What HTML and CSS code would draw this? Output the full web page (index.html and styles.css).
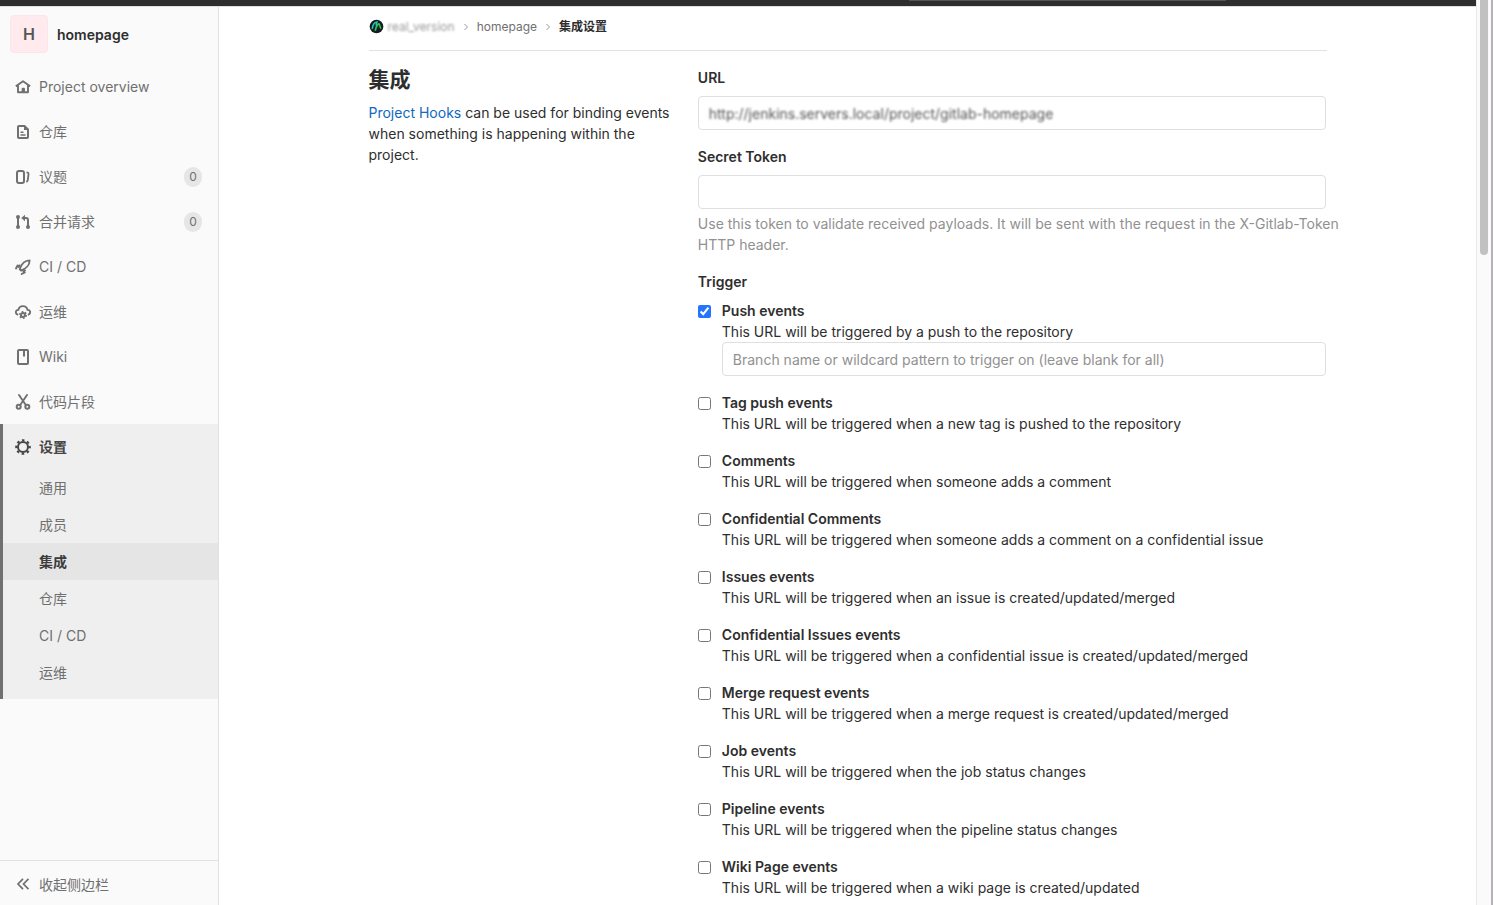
FILE: index.html
```html
<!DOCTYPE html>
<html lang="zh-CN">
<head>
<meta charset="utf-8">
<title>集成设置 · homepage</title>
<link rel="stylesheet" href="styles.css">
</head>
<body>
<div class="window">
  <div class="page">
    <header class="topbar"><div class="topbar-search"></div></header>
    <div class="layout">
      <aside class="sidebar">
        <div class="sidebar-scroll">
          <a class="project" href="#"><span class="project-avatar">H</span><span class="project-name">homepage</span></a>
          <nav>
            <a class="nav-item" href="#">
              <svg class="icon" viewBox="0 0 16 16"><path d="M.8 7.200 8 2.200l7.200 5M3 6.500V13.200H13V6.500M7.600 13V9.800H9V13" fill="none" stroke="currentColor" stroke-width="1.900" stroke-linejoin="round"/></svg>
              <span>Project overview</span></a>
            <a class="nav-item" href="#">
              <svg class="icon" viewBox="0 0 16 16"><path d="M4 2h5.500L13 5.500V13a1 1 0 0 1-1 1H4a1 1 0 0 1-1-1V3a1 1 0 0 1 1-1z" fill="none" stroke="currentColor" stroke-width="2"/><path d="M9 1.500V6h4.500zM5.500 7.500h3v1.500h-3zM5.500 10.300h5v1.500h-5z" fill="currentColor"/></svg>
              <span>仓库</span></a>
            <a class="nav-item" href="#">
              <svg class="icon" viewBox="0 0 16 16"><rect x="2" y="2" width="7" height="12" rx="2" fill="none" stroke="currentColor" stroke-width="2"/><path d="M11.500 3.300c1.700 0 2.200.8 2 2l-.7 5.500c-.1 1-.6 1.700-1.500 2" fill="none" stroke="currentColor" stroke-width="1.800"/></svg>
              <span>议题</span><span class="badge">0</span></a>
            <a class="nav-item" href="#">
              <svg class="icon" viewBox="0 0 16 16"><path d="M3 3v10M8.500 4H11q2 0 2 2v7" fill="none" stroke="currentColor" stroke-width="2"/><path d="M10 .8v6.400L6.200 4z" fill="currentColor"/><circle cx="3" cy="3" r="2" fill="currentColor"/><circle cx="3" cy="13" r="2" fill="currentColor"/><circle cx="13" cy="13" r="2" fill="currentColor"/></svg>
              <span>合并请求</span><span class="badge">0</span></a>
            <a class="nav-item" href="#">
              <svg class="icon" viewBox="0 0 16 16"><path d="M14.600 1.400C10.500 1.500 6.500 4.700 4.700 10.200l1.300 1.300c5-1.700 8.600-5.700 8.600-10.100z" fill="none" stroke="currentColor" stroke-width="1.900" stroke-linejoin="round"/><path d="M1 9.500 2.600 6.400M3.600 8l.9-1.600M6.700 15l3.100-1.600M8.400 12.300l1.600-.9" fill="none" stroke="currentColor" stroke-width="1.900" stroke-linecap="round"/></svg>
              <span>CI / CD</span></a>
            <a class="nav-item" href="#">
              <svg class="icon" viewBox="0 0 16 16"><path d="M3.200 10.800C-.2 9.800.3 5.900 3.400 5.900 4.300.8 11.500.8 12.500 5.900c3.300 0 3.600 4 .4 4.900" fill="none" stroke="currentColor" stroke-width="1.900"/><circle cx="8" cy="11" r="2" fill="none" stroke="currentColor" stroke-width="2"/><circle cx="8" cy="11" r="3.300" fill="none" stroke="currentColor" stroke-width="1.500" stroke-dasharray="1.700 1.756"/></svg>
              <span>运维</span></a>
            <a class="nav-item" href="#">
              <svg class="icon" viewBox="0 0 16 16"><rect x="3" y="1" width="10" height="14" rx="1" fill="none" stroke="currentColor" stroke-width="2"/><path d="M8 2h2v6L9 7 8 8z" fill="currentColor"/></svg>
              <span>Wiki</span></a>
            <a class="nav-item" href="#">
              <svg class="icon" viewBox="0 0 16 16"><path d="M4 1 10.800 11M12 1 5.200 11" fill="none" stroke="currentColor" stroke-width="1.900" stroke-linecap="round"/><circle cx="3.700" cy="12.800" r="2" fill="none" stroke="currentColor" stroke-width="2"/><circle cx="12.300" cy="12.800" r="2" fill="none" stroke="currentColor" stroke-width="2"/></svg>
              <span>代码片段</span></a>
            <div class="nav-group">
              <a class="nav-item nav-item-active" href="#">
                <svg class="icon" viewBox="0 0 16 16"><circle cx="8" cy="8" r="5" fill="none" stroke="currentColor" stroke-width="2"/><circle cx="8" cy="8" r="6.800" fill="none" stroke="currentColor" stroke-width="2" stroke-dasharray="2.600 2.740" stroke-dashoffset="1.300"/></svg>
                <span>设置</span></a>
              <a class="sub-item" href="#">通用</a>
              <a class="sub-item" href="#">成员</a>
              <a class="sub-item sub-item-active" href="#">集成</a>
              <a class="sub-item" href="#">仓库</a>
              <a class="sub-item" href="#">CI / CD</a>
              <a class="sub-item" href="#">运维</a>
            </div>
          </nav>
        </div>
        <button class="collapse" type="button">
          <svg class="icon" viewBox="0 0 16 16"><path d="M8 2.800 3 8l5 5.200M13.500 2.800 8.500 8l5 5.200" fill="none" stroke="currentColor" stroke-width="1.700"/></svg>
          <span>收起侧边栏</span></button>
      </aside>
      <main class="main">
        <div class="container">
          <nav class="breadcrumbs">
            <a class="crumb crumb-group" href="#">
              <svg class="group-logo" viewBox="0 0 16 16"><circle cx="8" cy="8" r="7.300" fill="#171b24"/><path d="M3.500 10.500C4 6.500 6 3.500 8.400 3.200L7.600 7" fill="none" stroke="#21c9bd" stroke-width="1.700"/><path d="M6.600 12.500C7.500 8.500 9.500 5 10.700 5.200c1.200.2.300 4.300 2.300 5" fill="none" stroke="#2bc557" stroke-width="1.700"/></svg>
              <span class="masked masked-light">real_version</span></a>
            <svg class="chevron" viewBox="0 0 8 8"><path d="M2.500 1 5.500 4l-3 3" fill="none" stroke="currentColor"/></svg>
            <a class="crumb" href="#">homepage</a>
            <svg class="chevron" viewBox="0 0 8 8"><path d="M2.500 1 5.500 4l-3 3" fill="none" stroke="currentColor"/></svg>
            <a class="crumb crumb-current" href="#">集成设置</a>
          </nav>
          <div class="row">
            <section class="intro">
              <h1 class="title">集成</h1>
              <p class="text"><a class="link" href="#">Project Hooks</a> can be used for binding events when something is happening within the project.</p>
            </section>
            <form class="form">
              <div class="field">
                <label class="label" for="url">URL</label>
                <div class="control"><input class="bare masked" id="url" type="text" value="http://jenkins.servers.local/project/gitlab-homepage"></div>
              </div>
              <div class="field">
                <label class="label" for="token">Secret Token</label>
                <input class="control" id="token" type="text">
                <p class="help">Use this token to validate received payloads. It will be sent with the request in the X-Gitlab-Token HTTP header.</p>
              </div>
              <div class="label">Trigger</div>
              <div class="trigger"><input class="check" id="push" type="checkbox" checked><div class="trigger-body"><label class="name" for="push">Push events</label><p class="text">This URL will be triggered by a push to the repository</p><input class="control" type="text" aria-label="Branch filter" placeholder="Branch name or wildcard pattern to trigger on (leave blank for all)"></div></div>
              <div class="trigger"><input class="check" id="tag" type="checkbox"><div class="trigger-body"><label class="name" for="tag">Tag push events</label><p class="text">This URL will be triggered when a new tag is pushed to the repository</p></div></div>
              <div class="trigger"><input class="check" id="note" type="checkbox"><div class="trigger-body"><label class="name" for="note">Comments</label><p class="text">This URL will be triggered when someone adds a comment</p></div></div>
              <div class="trigger"><input class="check" id="cnote" type="checkbox"><div class="trigger-body"><label class="name" for="cnote">Confidential Comments</label><p class="text">This URL will be triggered when someone adds a comment on a confidential issue</p></div></div>
              <div class="trigger"><input class="check" id="issue" type="checkbox"><div class="trigger-body"><label class="name" for="issue">Issues events</label><p class="text">This URL will be triggered when an issue is created/updated/merged</p></div></div>
              <div class="trigger"><input class="check" id="cissue" type="checkbox"><div class="trigger-body"><label class="name" for="cissue">Confidential Issues events</label><p class="text">This URL will be triggered when a confidential issue is created/updated/merged</p></div></div>
              <div class="trigger"><input class="check" id="mr" type="checkbox"><div class="trigger-body"><label class="name" for="mr">Merge request events</label><p class="text">This URL will be triggered when a merge request is created/updated/merged</p></div></div>
              <div class="trigger"><input class="check" id="job" type="checkbox"><div class="trigger-body"><label class="name" for="job">Job events</label><p class="text">This URL will be triggered when the job status changes</p></div></div>
              <div class="trigger"><input class="check" id="pipeline" type="checkbox"><div class="trigger-body"><label class="name" for="pipeline">Pipeline events</label><p class="text">This URL will be triggered when the pipeline status changes</p></div></div>
              <div class="trigger"><input class="check" id="wiki" type="checkbox"><div class="trigger-body"><label class="name" for="wiki">Wiki Page events</label><p class="text">This URL will be triggered when a wiki page is created/updated</p></div></div>
            </form>
          </div>
        </div>
      </main>
    </div>
  </div>
  <div class="scrollbar"><div class="scroll-thumb"></div></div>
</div>
</body>
</html>
```
FILE: styles.css
```css
* { box-sizing: border-box; }
body {
  margin: 0;
  background: #fff;
  color: #2e2e2e;
  font-family: Inter, "Noto Sans CJK SC", sans-serif;
  font-size: 14px;
  line-height: 21px;
}
a { color: inherit; text-decoration: none; }
p, h1 { margin: 0; }
input, button { font: inherit; color: inherit; }

.window { display: flex; height: 100vh; overflow: hidden; }
.page { flex: 1; min-width: 0; display: flex; flex-direction: column; }
.topbar {
  flex: none;
  height: 7px;
  background: #2e2e2e;
  border-bottom: 1px solid #dfdfdf;
  display: flex;
  justify-content: flex-end;
  padding-right: 250px;
}
.topbar-search { width: 317px; height: 1px; background: #545454; }
.layout { flex: 1; min-height: 0; display: flex; }

.sidebar {
  flex: none;
  width: 219px;
  background: #fafafa;
  display: flex;
  flex-direction: column;
  color: #707070;
  border-right: 1px solid #e1e1e1;
}
.sidebar-scroll { flex: 1; min-height: 0; overflow: hidden; }
.project {
  display: flex;
  align-items: center;
  gap: 9px;
  padding: 8px 10px 11px;
  color: #2e2e2e;
  font-weight: 600;
}
.project-avatar {
  width: 38px;
  height: 38px;
  border-radius: 4px;
  background: #ffebee;
  border: 1px solid #fbe6e9;
  color: #555;
  font-size: 16px;
  display: flex;
  align-items: center;
  justify-content: center;
}
.nav-item {
  display: flex;
  align-items: center;
  gap: 8px;
  height: 45px;
  padding: 0 16px 0 15px;
}
.icon { flex: none; width: 16px; height: 16px; }
.badge {
  margin-left: auto;
  min-width: 18px;
  height: 20px;
  border-radius: 10px;
  background: #e6e6e6;
  font-size: 12px;
  line-height: 20px;
  text-align: center;
}
.nav-group {
  background: #efefef;
  border-left: 3px solid #707070;
  padding-bottom: 8px;
}
.nav-group .nav-item { padding-left: 12px; }
.nav-item-active { color: #454545; font-weight: 600; }
.sub-item { display: block; padding: 8px 16px 8px 36px; }
.sub-item-active { background: #e5e5e5; color: #3c3c3c; font-weight: 600; }
.collapse {
  display: flex;
  align-items: center;
  gap: 8px;
  height: 45px;
  padding: 2px 15px 0;
  border: 0;
  border-top: 1px solid #e1e1e1;
  background: #fafafa;
}

.main { flex: 1; min-width: 0; overflow: hidden; }
.container { max-width: 990px; margin: 0 auto; padding: 0 16px; }
.breadcrumbs {
  display: flex;
  align-items: center;
  gap: 7px;
  height: 44px;
  padding-bottom: 4px;
  border-bottom: 1px solid #e1e1e1;
  font-size: 12px;
  color: #707070;
}
.crumb-group { display: flex; align-items: center; gap: 4px; }
.crumb-current { color: #2e2e2e; font-weight: 600; }
.group-logo { width: 15px; height: 15px; }
.chevron { width: 8px; height: 8px; color: #999; }
.masked { filter: blur(1px); color: #555; }
.masked-light { color: #999; }

.row { display: flex; margin: 0 -15px; padding-top: 16px; }
.intro { width: 33.3333%; padding: 0 10px 0 15px; }
.form { width: 66.6667%; padding: 0 15px; }
.title { font-size: 21px; line-height: 26px; font-weight: 600; margin-bottom: 9px; }
.link { color: #1068bf; }
.field { margin-bottom: 16px; }
.label { display: block; font-weight: 600; margin-bottom: 8px; }
.control {
  display: block;
  width: 100%;
  height: 34px;
  padding: 6px 10px;
  border: 1px solid #dfdfdf;
  border-radius: 4px;
  background: #fff;
}
.control::placeholder { color: #919191; opacity: 1; }
.bare { display: block; width: 100%; height: 21px; padding: 0; border: 0; background: none; }
.help { margin: 4px -16px 0 0; color: #919191; }
.trigger { display: flex; gap: 11px; margin-bottom: 16px; }
.check { flex: none; width: 13px; height: 13px; margin: 5px 0 0; accent-color: #2574ff; }
.trigger-body { flex: 1; min-width: 0; }
.name { display: block; font-weight: 600; }

.scrollbar {
  flex: none;
  width: 17px;
  background: #fafafa;
  border-left: 1px solid #e8e8e8;
  border-right: 2px solid #b5b3b5;
  padding: 0 3px;
}
.scroll-thumb { height: 255px; width: 8px; border-radius: 0 0 4px 4px; background: #c1c1c1; }
```
